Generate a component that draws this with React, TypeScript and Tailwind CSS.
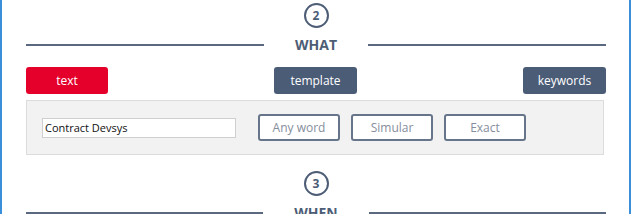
import React from "react"

const font = { fontFamily: '"Open Sans", "Noto Sans", sans-serif' }

function StepBadge({ n }: { n: number }) {
  return (
    <div className="mx-auto flex h-[25px] w-[25px] items-center justify-center rounded-full border-2 border-[#4d5d76] text-[12px] font-bold leading-none text-[#4d5d76]">
      {n}
    </div>
  )
}

function Heading({ label }: { label: string }) {
  return (
    <div className="grid h-[18px] grid-cols-[1fr_auto_1fr] items-center gap-[31px]">
      <div className="h-[2px] bg-[#5a6880]" />
      <span className="text-[14px] font-bold leading-none text-[#4d5d76]">{label}</span>
      <div className="h-[2px] bg-[#5a6880]" />
    </div>
  )
}

function MatchButton({ label }: { label: string }) {
  return (
    <button className="flex h-[27px] w-[82px] items-center justify-center rounded-[3px] border-2 border-[#67758a] bg-white text-[12px] text-[#858e9c]">
      {label}
    </button>
  )
}

export default function App() {
  return (
    <div
      className="h-[214px] w-[631px] overflow-hidden border-x-2 border-[#3a8fd8] bg-white pl-[24px] pr-[23px] pt-[3px]"
      style={font}
    >
      <StepBadge n={2} />
      <div className="mt-[8px]">
        <Heading label="WHAT" />
      </div>

      <div className="mt-[13px] flex justify-between">
        <button className="h-[27px] w-[82px] rounded-[3px] bg-[#e4002b] text-[12px] text-white">text</button>
        <button className="h-[27px] w-[83px] rounded-[3px] bg-[#4b5c77] text-[12px] text-white">template</button>
        <button className="h-[27px] w-[83px] rounded-[3px] bg-[#4b5c77] text-[12px] text-white">keywords</button>
      </div>

      <div className="mt-[6px] flex h-[55px] w-[578px] items-center border border-[#dcdcdc] bg-[#f2f2f2] pl-[15px]">
        <input
          readOnly
          value="Contract Devsys"
          className="h-[20px] w-[194px] border border-[#cfcfcf] bg-white px-[2px] text-[11px] text-[#111]"
          style={font}
        />
        <div className="ml-[22px] flex gap-[11px]">
          <MatchButton label="Any word" />
          <MatchButton label="Simular" />
          <MatchButton label="Exact" />
        </div>
      </div>

      <div className="mt-[16px]">
        <StepBadge n={3} />
      </div>
      <div className="mt-[8px]">
        <Heading label="WHEN" />
      </div>
    </div>
  )
}
